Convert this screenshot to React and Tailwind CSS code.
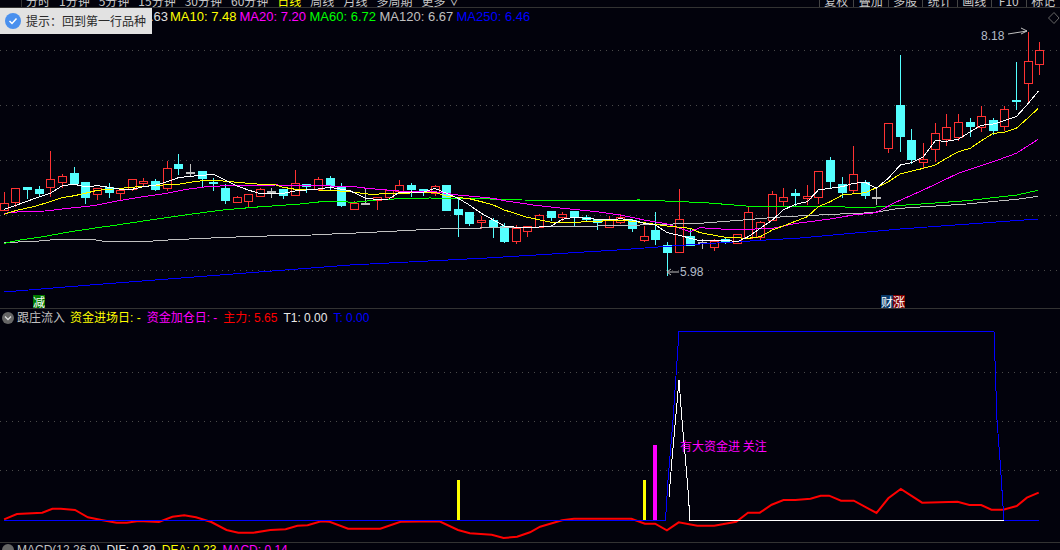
const RED = "#ff3232";
const CYAN = "#54ffff";
const GRAY = "#c0c0c0";

// zoomed crop coordinates -> page coordinates
const fromA = ([x, y]) => [x / 3, 130 + y / 3];
const fromB = ([x, y]) => [350 + x / 3, 160 + y / 3];
const fromC = ([x, y]) => [700 + x / 3, 20 + y / 3];
const fromD = ([x, y]) => [x * 0.338, 490 + y / 3];
const fromE = ([x, y]) => [530 + x * 0.338, 420 + y / 3];

// x, high, top, bottom, low, colour
const candlesA = [
  [13, 183, 220, 240, 240, "r"], [46, 175, 175, 215, 228, "r"], [82, 171, 171, 177, 205, "c"], [118, 165, 177, 189, 195, "c"],
  [151, 60, 148, 172, 197, "r"], [187, 128, 139, 157, 170, "r"], [223, 108, 129, 159, 163, "c"], [256, 153, 156, 200, 218, "c"],
  [292, 172, 175, 193, 207, "r"], [328, 156, 172, 185, 200, "c"], [361, 175, 180, 190, 210, "r"], [397, 144, 148, 177, 180, "r"],
  [430, 141, 153, 159, 165, "r"], [466, 144, 153, 177, 180, "c"], [502, 90, 115, 173, 180, "r"], [535, 69, 102, 114, 132, "c"],
  [571, 99, 125, 126, 135, "g"], [607, 123, 123, 144, 170, "c"], [640, 141, 156, 158, 180, "c"], [676, 159, 174, 210, 219, "c"],
  [712, 195, 202, 215, 215, "r"], [745, 190, 193, 212, 231, "r"], [781, 171, 178, 197, 197, "r"], [814, 171, 183, 184, 201, "g"],
  [850, 177, 177, 195, 204, "c"], [886, 117, 160, 194, 194, "r"], [919, 159, 163, 169, 186, "c"], [955, 138, 148, 178, 180, "r"],
  [991, 135, 144, 165, 177, "c"], [1024, 156, 171, 225, 228, "c"],
];
const candlesB = [
  [13, 120, 129, 146, 146, "r"], [46, 81, 129, 130, 132, "g"], [80, 110, 110, 120, 147, "r"], [116, 91, 91, 110, 117, "r"],
  [148, 57, 76, 93, 95, "r"], [184, 66, 75, 87, 108, "c"], [220, 88, 88, 93, 106, "c"], [254, 72, 79, 98, 105, "r"],
  [289, 72, 75, 150, 150, "c"], [325, 110, 147, 162, 228, "c"], [358, 156, 156, 189, 195, "c"], [394, 165, 180, 186, 204, "r"],
  [430, 170, 180, 198, 231, "c"], [463, 186, 198, 243, 246, "c"], [499, 192, 204, 242, 249, "r"], [532, 198, 199, 212, 228, "r"],
  [568, 159, 166, 201, 201, "r"], [604, 153, 153, 171, 180, "c"], [637, 153, 163, 171, 180, "r"], [673, 153, 153, 168, 198, "c"],
  [709, 162, 172, 176, 180, "c"], [742, 177, 177, 187, 207, "c"], [778, 165, 178, 200, 200, "r"], [811, 159, 172, 185, 189, "r"],
  [847, 175, 180, 204, 213, "c"], [883, 196, 229, 239, 243, "r"], [916, 153, 210, 237, 252, "c"], [952, 243, 255, 275, 345, "c"],
  [988, 84, 178, 275, 275, "r"], [1021, 200, 229, 254, 256, "c"],
];
const candlesC = [
  [7, 655, 665, 666, 685, "g"], [43, 655, 662, 682, 690, "r"], [76, 650, 657, 663, 670, "c"], [112, 643, 643, 668, 668, "r"],
  [145, 558, 577, 655, 655, "r"], [181, 600, 607, 650, 658, "r"], [217, 510, 523, 600, 600, "r"], [250, 501, 532, 544, 558, "r"],
  [286, 504, 519, 525, 558, "c"], [322, 492, 529, 535, 553, "r"], [355, 454, 454, 532, 549, "r"], [391, 408, 420, 483, 500, "c"],
  [427, 468, 492, 516, 531, "c"], [460, 375, 463, 509, 516, "r"], [496, 478, 486, 524, 533, "c"], [529, 505, 532, 533, 552, "g"],
  [565, 310, 310, 385, 395, "r"], [601, 102, 255, 347, 393, "c"], [634, 324, 360, 416, 430, "c"], [670, 366, 418, 425, 445, "r"],
  [706, 306, 340, 388, 423, "r"], [739, 279, 322, 358, 376, "r"], [775, 279, 307, 350, 360, "r"], [811, 291, 306, 317, 348, "c"],
  [844, 255, 289, 322, 332, "r"], [880, 291, 300, 330, 342, "c"], [913, 255, 268, 317, 330, "r"], [949, 123, 240, 243, 267, "c"],
  [985, 33, 124, 190, 250, "r"], [1018, 63, 91, 133, 162, "r"],
];

const toCandles = (rows, conv) =>
  rows.map(([x, h, t, b, l, c]) => {
    const px = Math.round(conv([x, 0])[0]) + 0.5;
    const py = (v) => Math.round(conv([0, v])[1]) + 0.5;
    return { x: px, high: py(h), top: py(t), bottom: py(b), low: py(l), c };
  });

const candles = [...toCandles(candlesA, fromA), ...toCandles(candlesB, fromB), ...toCandles(candlesC, fromC)];

const ma5 = [
  ...[[13,238],[50,225],[100,207],[151,190],[187,167],[223,163],[256,170],[292,167],[328,172],[361,178],[397,178],[430,170],[466,166],[502,155],[535,143],[571,139],[607,136],[640,133],[676,150],[712,168],[745,180],[781,191],[814,192],[850,190],[886,183],[919,180],[955,177],[991,172]].map(fromA),
  ...[[0,92],[46,115],[80,118],[116,117],[148,97],[184,96],[220,97],[254,85],[289,100],[325,115],[358,135],[394,160],[430,180],[463,198],[499,202],[532,203],[568,201],[604,198],[637,178],[673,172],[709,175],[742,178],[778,180],[811,176],[847,180],[883,190],[916,195],[952,218],[988,226],[1021,235]].map(fromB),
  ...[[0,662],[76,660],[112,665],[145,650],[181,625],[217,600],[250,570],[286,553],[322,545],[355,510],[391,505],[427,500],[460,490],[496,487],[529,505],[565,475],[601,435],[634,428],[670,410],[706,362],[739,364],[775,358],[811,335],[844,316],[880,312],[913,302],[949,290],[985,250],[1015,214]].map(fromC),
];
const ma10 = [
  ...[[13,253],[50,241],[100,230],[151,215],[187,203],[223,197],[256,190],[292,181],[328,178],[361,175],[430,169],[502,164],[535,163],[571,157],[607,152],[660,152],[712,157],[745,160],[781,163],[822,163],[850,172],[886,178],[955,180],[1005,182]].map(fromA),
  ...[[0,95],[60,103],[148,100],[254,97],[289,108],[358,116],[394,125],[430,135],[463,150],[532,172],[604,187],[673,187],[742,184],[811,180],[883,188],[952,198],[1021,205]].map(fromB),
  ...[[0,638],[76,652],[145,655],[181,650],[217,630],[250,618],[322,590],[355,560],[391,545],[427,525],[496,518],[529,503],[565,485],[601,462],[670,445],[706,435],[739,415],[775,395],[811,385],[844,362],[880,340],[913,337],[949,325],[985,293],[1015,265]].map(fromC),
];
const ma20 = [
  ...[[13,250],[60,245],[135,243],[205,235],[280,227],[350,213],[430,200],[500,190],[560,178],[620,170],[700,166],[830,165],[1040,169]].map(fromA),
  ...[[0,78],[50,85],[148,93],[254,95],[325,105],[430,115],[463,122],[550,135],[637,145],[742,155],[811,165],[883,180],[952,192],[1021,215]].map(fromB),
  ...[[0,623],[76,628],[145,628],[217,625],[290,610],[391,597],[460,585],[529,578],[580,550],[670,510],[775,460],[880,425],[949,400],[1015,358]].map(fromC),
];
const ma60 = [
  ...[[13,340],[60,330],[130,320],[200,307],[280,295],[350,285],[450,270],[570,253],[660,241],[760,232],[900,222],[975,214],[1040,214]].map(fromA),
  ...[[0,128],[100,118],[238,114],[350,115],[515,120],[690,121],[870,120],[1040,127]].map(fromB),
  ...[[0,547],[76,553],[164,560],[350,560],[515,562],[650,553],[800,542],[950,525],[1015,511]].map(fromC),
];
const ma120 = [
  ...[[13,338],[135,332],[168,328],[275,328],[312,334],[445,334],[520,329],[655,323],[760,319],[935,315],[1040,310]].map(fromA),
  ...[[0,220],[100,215],[240,208],[340,205],[620,200],[800,197],[1040,190]].map(fromB),
  ...[[0,610],[130,600],[250,590],[400,583],[515,578],[600,565],[800,552],[950,538],[1015,529]].map(fromC),
];
const ma250 = [[4,292],[90,285],[350,265],[487,258],[617,250],[700,244],[800,238],[900,229],[1038,219]];

const mainRed = [
  ...[[12,88],[50,72],[125,68],[155,56],[180,56],[222,60],[260,82],[300,90],[345,98],[375,98],[410,93],[470,96],[510,80],[545,76],[580,82],[625,96],[670,120],[705,128],[750,128],[800,120],[845,118],[880,107],[910,106],[950,94],[975,95],[1030,116],[1125,116],[1185,95],[1300,94],[1355,120],[1390,130],[1455,134],[1490,144],[1530,140]].map(fromD),
  ...[[0,337],[30,320],[95,301],[130,296],[300,296],[340,311],[370,311],[405,331],[440,307],[495,317],[545,317],[610,305],[645,278],[680,278],[715,254],[750,240],[785,240],[830,236],[860,227],[885,227],[920,242],[958,242],[1025,279],[1060,235],[1097,207],[1160,248],[1265,245],[1300,255],[1335,255],[1365,269],[1400,269],[1440,258],[1470,233],[1505,218]].map(fromE),
];
const mainBlue = [[4,520.5],[665.5,520.5],[668,480],[673,420],[679,331.5],[994,331.5],[997,420],[1000,460],[1004,520.5],[1039,520.5]];
const mainWhite = [[669,497],[672,459],[675.5,420],[679,380],[682,420],[685.5,460],[688,490],[690,520.5],[1004,520.5]];

const pts = (list) => list.map(([x, y]) => `${x.toFixed(1)},${y.toFixed(1)}`).join(" ");

function Candle({ x, high, top, bottom, low, c }) {
  const color = c === "r" ? RED : c === "c" ? CYAN : GRAY;
  return (
    <g stroke={color} shapeRendering="crispEdges">
      <line x1={x} x2={x} y1={high} y2={top} />
      <line x1={x} x2={x} y1={bottom} y2={low} />
      <rect x={x - 4} y={top} width={8} height={Math.max(bottom - top, 1)} fill={c === "c" ? CYAN : "#02020c"} />
    </g>
  );
}

function Dotted({ y, x2 = 1060 }) {
  return <line x1="0" x2={x2} y1={y} y2={y} stroke="#4a4a4a" strokeDasharray="1 5" shapeRendering="crispEdges" />;
}

function Line({ points, color }) {
  return <polyline points={pts(points)} fill="none" stroke={color} shapeRendering="crispEdges" />;
}

function TopBar() {
  const tabs = ["分时", "1分钟", "5分钟", "15分钟", "30分钟", "60分钟", "日线", "周线", "月线", "多周期", "更多 ∨"];
  const tools = ["复权", "叠加", "多股", "统计", "画线", "F10", "标记"];
  return (
    <div className="h-2 shrink-0 flex items-end overflow-hidden border-b border-[#333] text-xs leading-[13px] text-[#c8c8c8]">
      <div className="w-[22px] h-full border-r border-[#333]" />
      <div className="flex gap-[9px] ml-1 flex-1">
        {tabs.map((t) => (
          <span key={t} className={t === "日线" ? "text-[#ffff00] shrink-0" : "shrink-0"}>{t}</span>
        ))}
      </div>
      <div className="flex">
        {tools.map((t) => (
          <span key={t} className="w-[34.5px] shrink-0 text-center border-l border-[#444]">{t}</span>
        ))}
      </div>
    </div>
  );
}

function MainChart() {
  return (
    <div className="relative h-[300px] shrink-0">
      <svg width="1060" height="300" viewBox="0 8 1060 300" className="block">
        <Dotted y={50.5} />
        <Dotted y={105.5} />
        <Dotted y={160.5} />
        <Dotted y={215.5} />
        <Dotted y={270.5} />
        {candles.map((k, i) => <Candle key={i} {...k} />)}
        <Line points={ma250} color="#0000ff" />
        <Line points={ma120} color="#c0c0c0" />
        <Line points={ma60} color="#00ff00" />
        <Line points={ma20} color="#ff00ff" />
        <Line points={ma10} color="#ffff00" />
        <Line points={ma5} color="#ffffff" />
        {/* high and low markers */}
        <path d="M1008 34 L1027 31 M1021 28 L1027 31 L1021 34" fill="none" stroke="#c0c0c0" />
        <path d="M667 272 L679 272 M671 269 L667 272 L671 275" fill="none" stroke="#c0c0c0" />
        <path d="M1054 12.5 L1059 18 L1054 23.5 L1048.5 18 Z" fill="none" stroke="#666" />
      </svg>

      {/* legend */}
      <div className="absolute left-[150px] top-0 flex text-[13px] leading-[18px] font-['Liberation_Sans',sans-serif] whitespace-nowrap">
        <span className="w-[20px] text-[#e0e0e0]">.63</span>
        <span className="w-[69.5px] text-[#ffff00]">MA10: 7.48</span>
        <span className="w-[70px] text-[#ff00ff]">MA20: 7.20</span>
        <span className="w-[70px] text-[#00ff00]">MA60: 6.72</span>
        <span className="w-[77px] text-[#c0c0c0]">MA120: 6.67</span>
        <span className="text-[#0000ff]">MA250: 6.46</span>
      </div>

      {/* toast */}
      <div className="absolute left-0 top-0 w-[152px] h-[26px] bg-[#e2e2e2] flex items-center pl-[5px] gap-[5px] text-xs text-[#2a2a2a] font-['Noto_Sans_CJK_SC',sans-serif] whitespace-nowrap">
        <svg width="16" height="16" viewBox="0 0 16 16" className="shrink-0">
          <circle cx="8" cy="8" r="8" fill="#4a90ee" />
          <path d="M4.5 8 L7 10.5 L11.5 5.5" fill="none" stroke="#fff" strokeWidth="1.5" />
        </svg>
        <span>提示：回到第一行品种</span>
      </div>

      {/* price labels */}
      <span className="absolute left-[981px] top-5 text-xs leading-4 text-[#b4bcc8] font-['Liberation_Sans',sans-serif]">8.18</span>
      <span className="absolute left-[680px] top-[256px] text-xs leading-4 text-[#b4bcc8] font-['Liberation_Sans',sans-serif]">5.98</span>

      {/* event tags */}
      <span className="absolute left-[33px] bottom-0 w-3 h-[13px] bg-[#007a00] text-white text-xs leading-[13px] text-center font-['Noto_Sans_CJK_SC',sans-serif]">减</span>
      <div className="absolute left-[881px] bottom-0 flex text-white text-xs leading-[13px] text-center font-['Noto_Sans_CJK_SC',sans-serif]">
        <span className="w-3 h-[13px] bg-[#0a3a6a]">财</span>
        <span className="w-3 h-[13px] bg-[#800000]">涨</span>
      </div>
    </div>
  );
}

function CapitalPanel() {
  return (
    <div className="relative flex-1 min-h-0 border-t border-[#333]">
      <svg width="1060" height="233" viewBox="0 309 1060 233" className="block">
        <Dotted y={372.5} />
        <Dotted y={421.5} />
        <Dotted y={470.5} />
        <rect x="457" y="480" width="3" height="40" fill="#ffff00" />
        <rect x="643" y="480" width="3" height="40" fill="#ffff00" />
        <rect x="653" y="445" width="4" height="75" fill="#ff00ff" />
        <polyline points={pts(mainRed)} fill="none" stroke="#ff0000" strokeWidth="2" />
        <Line points={mainBlue} color="#0000ff" />
        <Line points={mainWhite} color="#ffffff" />
      </svg>

      <div className="absolute left-0 top-0 h-[18px] flex items-center text-xs whitespace-nowrap font-['Liberation_Sans','Noto_Sans_CJK_SC',sans-serif]">
        <svg width="14" height="14" viewBox="0 0 14 14" className="ml-px mr-[2px] shrink-0">
          <circle cx="7" cy="7" r="6" fill="#666" />
          <path d="M4 5.5 L7 8.5 L10 5.5" fill="none" stroke="#ddd" strokeWidth="1.3" />
        </svg>
        <span className="text-[#c0c0c0] mr-[5px]">跟庄流入</span>
        <span className="text-[#ffff00] mr-[6px]">资金进场日: -</span>
        <span className="text-[#ff00ff] mr-[6px]">资金加仓日: -</span>
        <span className="text-[#ff0000] mr-[6px]">主力: 5.65</span>
        <span className="text-[#e8e8e8] mr-[6px]">T1: 0.00</span>
        <span className="text-[#0000ff]">T: 0.00</span>
      </div>

      <span className="absolute left-[680px] top-[128px] text-xs leading-[18px] text-[#ff00ff] font-['Noto_Sans_CJK_SC',sans-serif] whitespace-nowrap">有大资金进 关注</span>
    </div>
  );
}

function MacdHeader() {
  return (
    <div className="h-2 shrink-0 border-t border-[#333] relative text-xs whitespace-nowrap font-['Liberation_Sans',sans-serif]">
      <div className="absolute left-0 top-0 h-[14px] flex items-center">
        <span className="w-3 h-3 rounded-full bg-[#666] ml-[2px] mr-[3px]" />
        <span className="text-[#c0c0c0] mr-[6px]">MACD(12,26,9)</span>
        <span className="text-[#e8e8e8] mr-[6px]">DIF: 0.39</span>
        <span className="text-[#ffff00] mr-[6px]">DEA: 0.23</span>
        <span className="text-[#ff00ff]">MACD: 0.14</span>
      </div>
    </div>
  );
}

export default function App() {
  return (
    <div className="w-[1060px] h-[550px] overflow-hidden flex flex-col bg-[#02020c] font-['Noto_Sans_CJK_SC',sans-serif]">
      <TopBar />
      <MainChart />
      <CapitalPanel />
      <MacdHeader />
    </div>
  );
}
